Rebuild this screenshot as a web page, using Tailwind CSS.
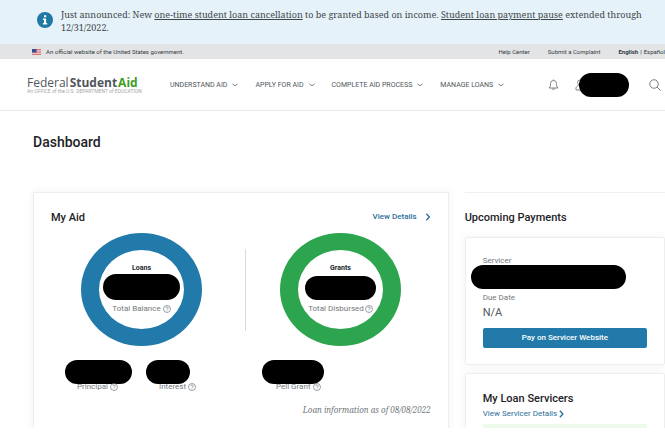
<!DOCTYPE html>
<html lang="en">
<head>
  <meta charset="UTF-8">
  <meta name="viewport" content="width=device-width, initial-scale=1.0">
  <title>Dashboard | Federal Student Aid</title>
  <script src="https://cdn.jsdelivr.net/npm/@tailwindcss/browser@4"></script>
</head>
<body class="bg-white overflow-hidden text-gray-700 font-['Roboto',sans-serif]">
  <!-- Icons used more than once -->
  <svg class="hidden">
    <symbol id="help" viewBox="0 0 16 16">
      <circle cx="8" cy="8" r="7" fill="none" stroke="currentColor" stroke-width="1.4"/>
      <path d="M5.7 6.3a2.3 2.3 0 1 1 3.5 1.9c-.8.5-1.2.8-1.2 1.6M8 11.2v1.3" fill="none" stroke="currentColor" stroke-width="1.4"/>
    </symbol>
    <symbol id="down" viewBox="0 0 12 8">
      <path d="M1 2l5 3.5L11 2" fill="none" stroke="currentColor" stroke-width="1.5"/>
    </symbol>
    <symbol id="right" viewBox="0 0 6 10">
      <path d="M1 1l3.7 4L1 9" fill="none" stroke="currentColor" stroke-width="1.7"/>
    </symbol>
  </svg>

  <!-- Announcement -->
  <div class="bg-[#e5f2f9] h-11 pl-[37px] pr-4 flex gap-2 pt-2">
    <svg class="w-4 h-4 mt-1 shrink-0" viewBox="0 0 16 16">
      <circle cx="8" cy="8" r="8" fill="#1f78a6"/>
      <path d="M7 3.3h2.2v2H7zM6 6.5h3.1v4.6h1.1v1.4H5.9v-1.4H7V7.9H6z" fill="#fff"/>
    </svg>
    <p class="font-['Noto_Serif','Liberation_Serif',serif] text-[9px] leading-[13px] text-[#3f464a]">Just announced: New <a href="#" class="underline">one-time student loan cancellation</a> to be granted based on income. <a href="#" class="underline">Student loan payment pause</a> extended through <span class="block">12/31/2022.</span></p>
  </div>

  <!-- Government bar -->
  <div class="bg-[#e2e4e6] h-[15px] pl-8 flex items-center justify-between whitespace-nowrap text-[6px] text-[#343a40]">
    <div class="flex items-center gap-[5px]">
      <svg class="w-[9px] h-[6px]" viewBox="0 0 18 12">
        <path fill="#f3dede" d="M0 0h18v12H0z"/>
        <path stroke="#cf4852" stroke-width="1.4" d="M0 1h18M0 4.2h18M0 7.6h18M0 11h18"/>
        <path fill="#3b4c8c" d="M0 0h9v7H0z"/>
      </svg>
      <span>An official website of the United States government.</span>
    </div>
    <div class="flex">
      <a href="#" class="mr-[18px]">Help Center</a>
      <a href="#" class="mr-[18px]">Submit a Complaint</a>
      <a href="#" class="font-bold">English</a><span class="mx-[2px]">|</span><a href="#">Español</a>
    </div>
  </div>

  <!-- Header -->
  <header class="h-[52px] border-b border-[#e9e9e9] pl-[27px] pr-1 flex items-center whitespace-nowrap text-[#50565b]">
    <a href="#" class="block w-[111px] mr-8">
      <span class="block font-['Open_Sans',sans-serif] text-[12px] leading-[13px]">Federal<span class="ml-px font-bold">Student</span><span class="ml-px font-bold text-[#3f9c22]">Aid</span></span>
      <span class="block text-[5px] leading-[4px] text-[#a3a6a9]">An OFFICE of the U.S. DEPARTMENT of EDUCATION</span>
    </a>
    <nav class="flex gap-[17px] pt-px text-[7px]">
      <button class="flex items-center gap-[5px]">UNDERSTAND AID<svg class="w-[6px] h-1"><use href="#down"/></svg></button>
      <button class="flex items-center gap-[5px]">APPLY FOR AID<svg class="w-[6px] h-1"><use href="#down"/></svg></button>
      <button class="flex items-center gap-[5px]">COMPLETE AID PROCESS<svg class="w-[6px] h-1"><use href="#down"/></svg></button>
      <button class="flex items-center gap-[5px]">MANAGE LOANS<svg class="w-[6px] h-1"><use href="#down"/></svg></button>
    </nav>
    <div class="ml-auto flex items-center text-[#6b7176]">
      <button aria-label="Notifications" class="mr-4">
        <svg class="w-[11px] h-3" viewBox="0 0 22 24" fill="none" stroke="currentColor" stroke-width="1.7">
          <path d="M2 18c3-2.5 3-5 3-9a6 6 0 0 1 12 0c0 4 0 6.5 3 9zM8.5 18.5a2.5 2.5 0 0 0 5 0M11 3V1"/>
        </svg>
      </button>
      <button aria-label="Account" class="flex items-center">
        <svg class="w-[10px] h-3" viewBox="0 0 20 24" fill="none" stroke="currentColor" stroke-width="1.7">
          <circle cx="10" cy="7" r="5"/><path d="M2 22v-3c0-3 2-5 5-6h6c3 1 5 3 5 6v3z"/>
        </svg>
        <span class="block w-[50px] h-6 -ml-[6px] rounded-full bg-black"></span>
      </button>
      <button aria-label="Search" class="ml-5">
        <svg class="w-3 h-3" viewBox="0 0 24 24" fill="none" stroke="currentColor" stroke-width="1.8">
          <circle cx="10" cy="10" r="8.5"/><path d="M16 16l7 7"/>
        </svg>
      </button>
    </div>
  </header>

  <main class="pl-[33px] h-[317px] overflow-hidden">
    <h1 class="text-[14px] leading-5 text-[#1d2226] pt-[21px] font-medium">Dashboard</h1>
    <div class="mt-10 grid grid-cols-[415fr_200fr] gap-4">
      <!-- My Aid -->
      <section class="h-[280px] border border-[#eee] shadow-[0_0_8px_rgba(0,0,0,0.06)] px-[17px] pt-[13px]">
        <div class="flex justify-between items-center">
          <h2 class="text-[11px] leading-5 font-medium text-[#1d2226] mt-[2px]">My Aid</h2>
          <a href="#" class="flex items-center gap-2 text-[8px] leading-4 font-medium text-[#2a6f9b]">View Details<svg class="w-[6px] h-2"><use href="#right"/></svg></a>
        </div>
        <div class="flex items-center mt-[5px] pl-[30px]">
          <div class="w-[121px] h-[113px] rounded-[50%] border-x-[18px] border-y-[17px] border-[#217aa9] flex flex-col items-center pt-[13px]">
            <span class="text-[7px] leading-[10px] font-bold text-[#22272b]">Loans</span>
            <span class="w-[77px] h-[26px] mt-px rounded-full bg-black"></span>
            <span class="flex items-center gap-[2px] mt-1 text-[8px] leading-[10px] text-[#74797d] whitespace-nowrap">Total Balance<svg class="w-2 h-2"><use href="#help"/></svg></span>
          </div>
          <div class="h-[82px] ml-[43px] mr-[34px] border-l border-[#d9d9d9]"></div>
          <div class="w-[121px] h-[113px] rounded-[50%] border-x-[18px] border-y-[17px] border-[#2da44e] flex flex-col items-center pt-[13px]">
            <span class="text-[7px] leading-[10px] font-bold text-[#22272b]">Grants</span>
            <span class="w-[71px] h-6 mt-[3px] rounded-full bg-black"></span>
            <span class="flex items-center gap-px mt-1 text-[8px] leading-[10px] text-[#74797d] whitespace-nowrap">Total Disbursed<svg class="w-2 h-2"><use href="#help"/></svg></span>
          </div>
        </div>
        <div class="flex mt-[14px] pl-[14px] text-[8px] leading-[8px] text-[#74797d]">
          <div class="w-[81px]">
            <div class="w-[67px] h-6 rounded-full bg-black"></div>
            <span class="flex items-center gap-[2px] pl-3 -mt-px">Principal<svg class="w-2 h-2"><use href="#help"/></svg></span>
          </div>
          <div class="w-[116px]">
            <div class="w-11 h-6 rounded-full bg-black"></div>
            <span class="flex items-center gap-[2px] pl-[13px] -mt-px">Interest<svg class="w-2 h-2"><use href="#help"/></svg></span>
          </div>
          <div>
            <div class="w-[62px] h-6 rounded-full bg-black"></div>
            <span class="flex items-center gap-[2px] pl-[14px] -mt-px">Pell Grant<svg class="w-2 h-2"><use href="#help"/></svg></span>
          </div>
        </div>
        <p class="mt-[13px] text-right italic font-['Noto_Serif','Liberation_Serif',serif] text-[8px] leading-[12px] text-[#74797d]">Loan information as of 08/08/2022</p>
      </section>

      <!-- Payments and servicers -->
      <aside class="border-t border-[#f0f0f0] pt-[15px]">
        <h2 class="text-[11px] leading-5 font-medium text-[#1d2226]">Upcoming Payments</h2>
        <section class="mt-[9px] h-[128px] border border-[#eee] rounded-xs shadow-[0_0_8px_rgba(0,0,0,0.06)] px-[17px] pt-[18px] text-[8px] text-[#74797d]">
          <p class="leading-[10px]">Servicer</p>
          <div class="w-[155px] h-6 -ml-3 -mt-px rounded-full bg-black"></div>
          <p class="leading-[10px] mt-1">Due Date</p>
          <p class="text-[11px] leading-4 mt-[2px] text-[#50565b]">N/A</p>
          <button class="block w-full h-5 mt-[7px] rounded-xs bg-[#217aa9] text-white font-medium">Pay on Servicer Website</button>
        </section>
        <section class="mt-2 h-20 border border-[#eee] rounded-xs shadow-[0_0_8px_rgba(0,0,0,0.06)] px-[17px] pt-[15px]">
          <h2 class="text-[11px] leading-5 font-medium text-[#1d2226]">My Loan Servicers</h2>
          <a href="#" class="flex items-center gap-[2px] text-[8px] leading-[10px] text-[#2a6f9b]">View Servicer Details<svg class="w-[5px] h-2"><use href="#right"/></svg></a>
          <div class="h-8 mt-[5px] bg-[#edfbea]"></div>
        </section>
      </aside>
    </div>
  </main>
</body>
</html>
